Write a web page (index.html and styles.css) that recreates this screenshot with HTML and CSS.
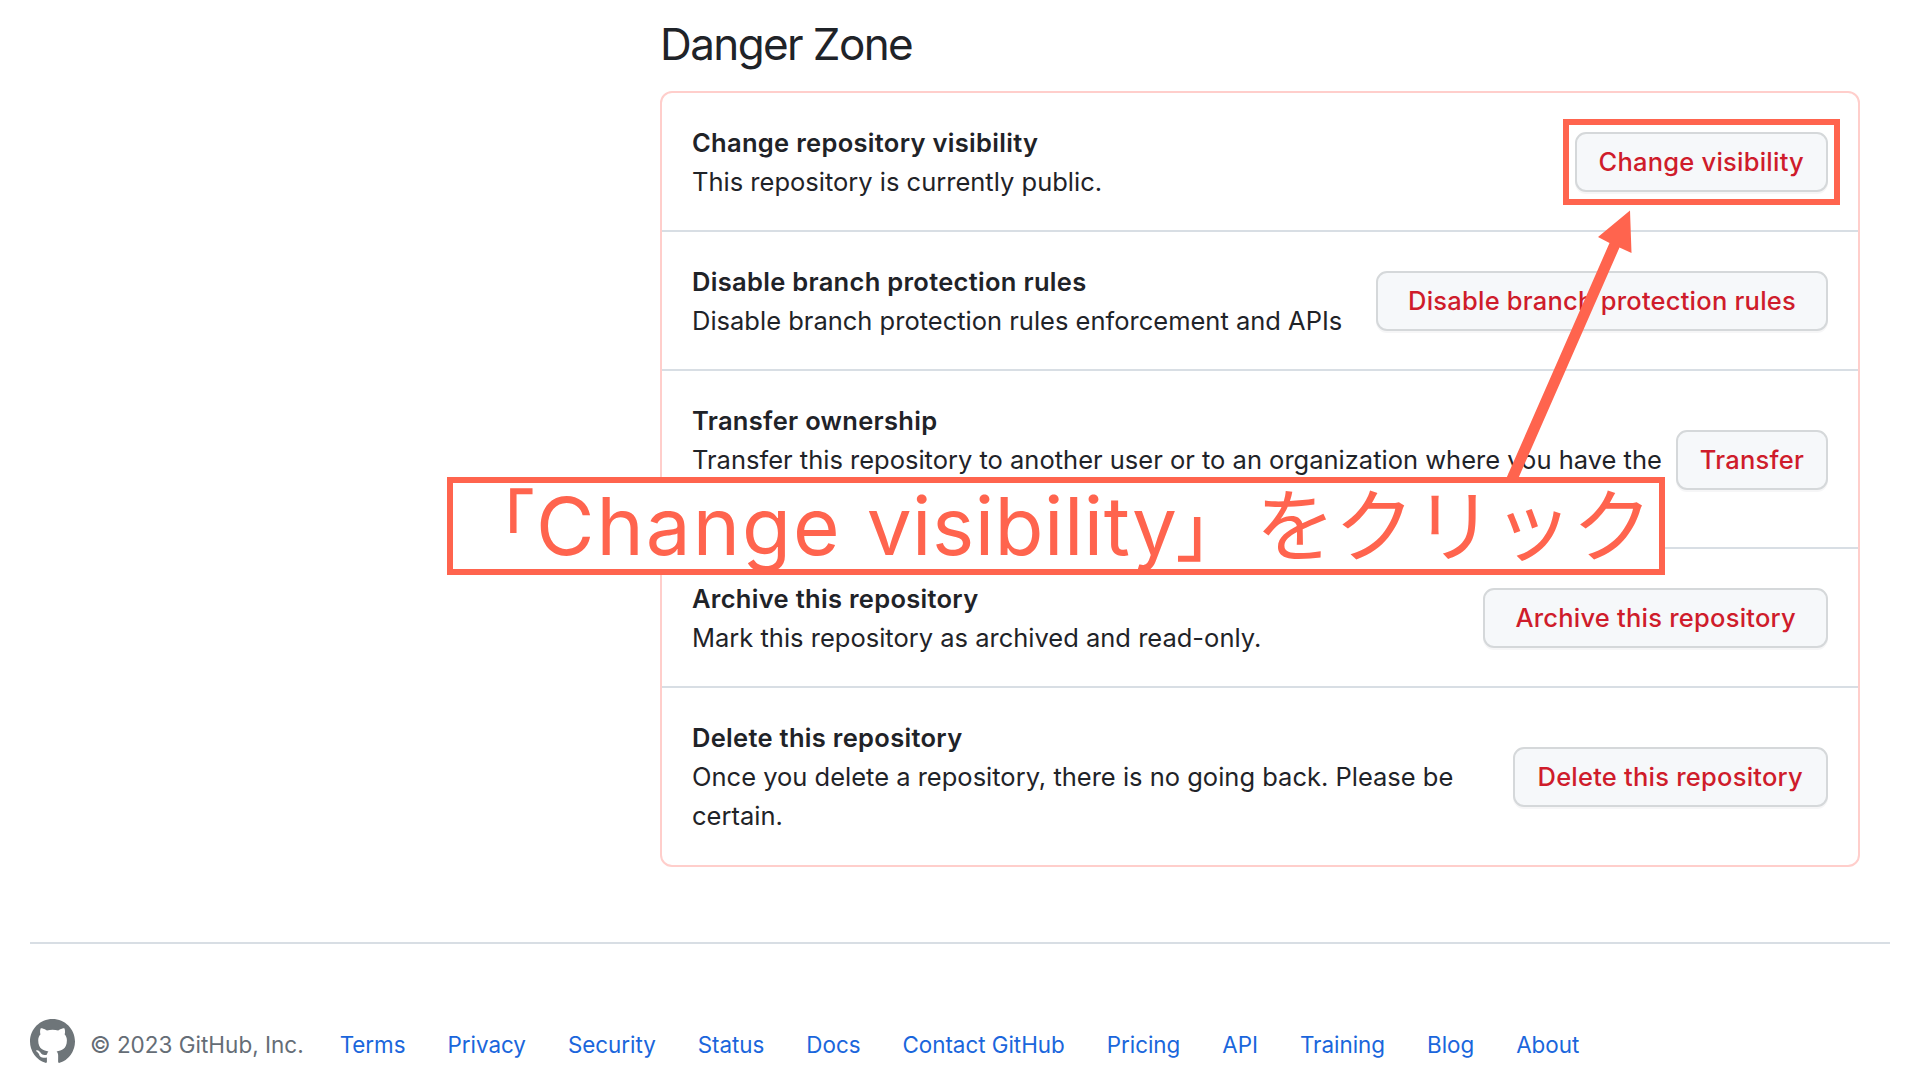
FILE: index.html
```html
<!DOCTYPE html>
<html lang="en">
<head>
<meta charset="utf-8">
<title>Danger Zone</title>
<link rel="stylesheet" href="styles.css">
</head>
<body>
<main class="settings">
  <h2 class="heading">Danger Zone</h2>
  <ul class="danger-box">
    <li class="row">
      <div class="info"><strong class="title">Change repository visibility</strong><p class="desc">This repository is currently public.</p></div>
      <button class="btn">Change visibility</button>
    </li>
    <li class="row">
      <div class="info"><strong class="title">Disable branch protection rules</strong><p class="desc">Disable branch protection rules enforcement and APIs</p></div>
      <button class="btn btn-wide">Disable branch protection rules</button>
    </li>
    <li class="row row-transfer">
      <div class="info"><strong class="title">Transfer ownership</strong><p class="desc">Transfer this repository to another user or to an organization where you have the</p></div>
      <button class="btn">Transfer</button>
    </li>
    <li class="row">
      <div class="info"><strong class="title">Archive this repository</strong><p class="desc">Mark this repository as archived and read-only.</p></div>
      <button class="btn btn-wide">Archive this repository</button>
    </li>
    <li class="row row-delete">
      <div class="info"><strong class="title">Delete this repository</strong><p class="desc">Once you delete a repository, there is no going back. Please be<br>certain.</p></div>
      <button class="btn">Delete this repository</button>
    </li>
  </ul>
</main>
<footer class="footer">
  <svg class="logo" viewBox="0 0 16 16" fill="currentColor"><path d="M8 0c4.42 0 8 3.58 8 8a8.013 8.013 0 0 1-5.45 7.59c-.4.08-.55-.17-.55-.38 0-.27.01-1.13.01-2.2 0-.75-.25-1.23-.54-1.48 1.78-.2 3.65-.88 3.65-3.95 0-.88-.31-1.59-.82-2.15.08-.2.36-1.02-.08-2.12 0 0-.67-.22-2.2.82-.64-.18-1.32-.27-2-.27-.68 0-1.36.09-2 .27-1.53-1.03-2.2-.82-2.2-.82-.44 1.1-.16 1.92-.08 2.12-.51.56-.82 1.28-.82 2.15 0 3.06 1.86 3.75 3.64 3.95-.23.2-.44.55-.51 1.07-.46.21-1.61.55-2.33-.66-.15-.24-.6-.83-1.23-.82-.67.01-.27.38.01.53.34.19.73.9.82 1.13.16.45.68 1.31 2.69.94 0 .67.01 1.3.01 1.49 0 .21-.15.45-.55.38A7.995 7.995 0 0 1 0 8c0-4.42 3.58-8 8-8Z"/></svg>
  <span class="copyright">© 2023 GitHub, Inc.</span>
  <nav class="links">
    <a>Terms</a><a>Privacy</a><a>Security</a><a>Status</a><a>Docs</a><a>Contact GitHub</a><a>Pricing</a><a>API</a><a>Training</a><a>Blog</a><a>About</a>
  </nav>
</footer>
<div class="highlight"></div>
<svg class="arrow" viewBox="0 0 140 275"><path d="M130 6.500 98 33l11.500 6L6 275h12L119.500 43.500l12 5.500z" fill="#ff644e"/></svg>
<div class="callout" lang="ja"><span class="open">「</span><span class="word">Change</span><span class="word word-last">visibility</span><span class="close">」</span><span class="kana">をクリック</span></div>
</body>
</html>
```
FILE: styles.css
```css
* { box-sizing: border-box; }
body {
  margin: 0;
  width: 1920px;
  height: 1080px;
  overflow: hidden;
  position: relative;
  background: #fff;
  color: #1f2328;
  font-family: Inter, "Liberation Sans", sans-serif;
}
.settings { padding: 17px 60px 0 660px; }
.heading { margin: 0 0 20px; font-size: 44px; font-weight: 400; line-height: 54px; letter-spacing: -1.6px; }
.danger-box {
  list-style: none;
  margin: 0;
  padding: 0;
  height: 776px;
  border: 2px solid #ffcecb;
  border-radius: 12px;
}
.row {
  display: flex;
  align-items: center;
  justify-content: space-between;
  height: 139px;
  padding: 1px 30px 0;
  border-bottom: 2px solid #d8dee4;
}
.row-transfer { height: 178px; }
.row-delete { height: 177px; padding-top: 0; border-bottom: 0; }
.info { padding-top: 1px; font-size: 25.500px; line-height: 39.6px; white-space: nowrap; }
.row-transfer .info { padding-bottom: 39px; }
.title { display: block; font-weight: 600; letter-spacing: 0.3px; }
.desc { margin: -1px 0 0; }
.btn {
  height: 60px;
  padding: 0 22px;
  border: 2px solid #d5d8da;
  border-radius: 11px;
  background: #f6f8fa;
  box-shadow: 0 2px 0 rgba(31, 35, 40, 0.04);
  color: #cf1c2b;
  font: 500 25.500px/1 Inter, sans-serif;
  letter-spacing: 0.23px;
  white-space: nowrap;
}
.btn-wide { padding: 0 30px; }
.row-delete .btn { padding-right: 23px; padding-left: 23px; }
.footer {
  display: flex;
  align-items: center;
  margin: 75px 30px 0;
  padding-top: 75px;
  border-top: 2px solid #d8dee4;
  font-size: 22.500px;
  line-height: 34px;
  white-space: nowrap;
}
.logo { width: 45px; height: 45px; color: #6e7579; }
.copyright { margin-left: 15px; padding-top: 6px; color: #656d76; }
.links { display: flex; gap: 42px; margin-left: 36px; padding-top: 6px; color: #1a66dc; font-size: 22.400px; letter-spacing: -0.02px; }
.highlight {
  position: absolute;
  left: 1563px;
  top: 119px;
  width: 277px;
  height: 86px;
  border: 6px solid #ff644e;
}
.arrow { position: absolute; left: 1500px; top: 204px; width: 140px; height: 275px; }
.callout {
  position: absolute;
  left: 447px;
  top: 477px;
  width: 1218px;
  height: 98px;
  border: 6px solid #ff644e;
  background: #fff;
  color: #ff644e;
  display: flex;
  align-items: baseline;
  font: 400 80px/74px Inter, "Noto Sans CJK JP", sans-serif;
  white-space: nowrap;
}
.open, .close, .kana { font-family: "Noto Sans CJK JP", sans-serif; }
.open, .close { font-size: 66px; -webkit-text-stroke: 1.5px #ff644e; }
.open { margin-left: 15px; transform: translateY(-10px); }
.word { margin-left: 2px; letter-spacing: 2px; }
.word-last { margin-left: 25px; letter-spacing: 0.5px; }
.close { margin-left: -1px; }
.kana { margin-left: 13px; letter-spacing: -0.8px; }
```
